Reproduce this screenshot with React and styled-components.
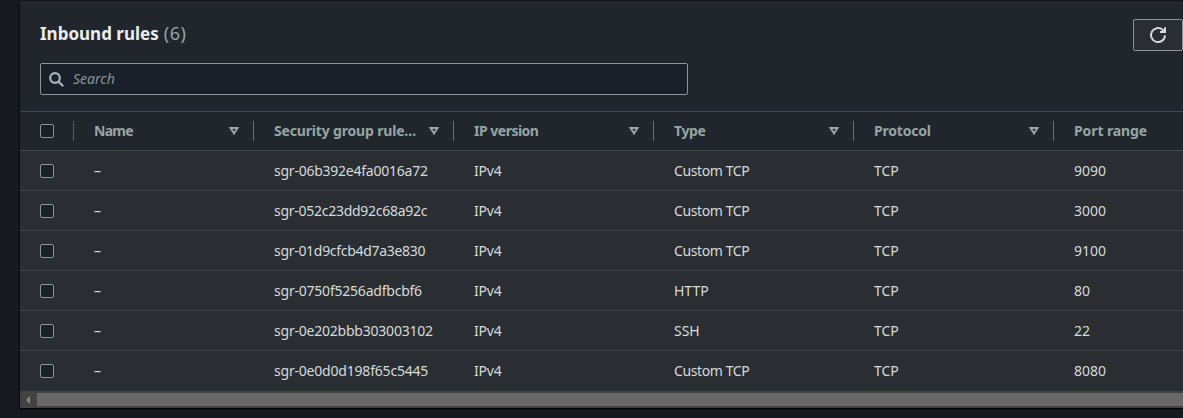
import React from 'react';
import styled, { createGlobalStyle } from 'styled-components';

const Global = createGlobalStyle`
  *, *::before, *::after { box-sizing: border-box; }
  body {
    margin: 0;
    background: #16191f;
    font-family: "Noto Sans", "Open Sans", sans-serif;
    font-size: 14px;
    line-height: 22px;
    color: #d5dbdb;
    overflow: hidden;
  }
`;

const Page = styled.div`
  height: 418px;
  padding: 2px 0 0 20px;
  overflow: hidden;
`;

const Panel = styled.section`
  height: 406px;
  background: #21252c;
  border-top: 1px solid #2c3036;
  box-shadow: 0 1px 1px 0 #000, -1px 1px 1px 0 rgba(0, 0, 0, 0.4);
`;

const PanelHeader = styled.header`
  display: flex;
  justify-content: space-between;
  height: 60px;
  padding: 16px 0 0 20px;
`;

const Title = styled.h2`
  margin: 3px 0 0;
  font-size: 17px;
  line-height: 24px;
  font-weight: 700;
  color: #eaeded;
  white-space: nowrap;
`;

const Counter = styled.span`
  font-size: 18px;
  font-weight: 400;
  line-height: 1;
  color: #95a5a6;
  margin-left: 5px;
  letter-spacing: 0.6px;
`;

const RefreshButton = styled.button`
  display: flex;
  align-items: center;
  justify-content: center;
  width: 50px;
  height: 32px;
  padding: 0;
  border: 1px solid #879596;
  border-radius: 2px;
  background: #2a2e33;
`;

const SearchBox = styled.label`
  display: flex;
  align-items: center;
  width: 648px;
  height: 32px;
  margin: 0 0 16px 20px;
  padding-left: 8px;
  gap: 9px;
  border: 1px solid #879596;
  border-radius: 2px;
  background: #1a2029;
`;

const SearchInput = styled.input`
  flex: 1;
  padding: 0;
  border: 0;
  outline: 0;
  background: transparent;
  font: italic 14px/22px "Noto Sans", sans-serif;
  color: #d5dbdb;
  &::placeholder { color: #879596; opacity: 1; }
`;

const Row = styled.div`
  display: grid;
  grid-template-columns: 54px 180px repeat(4, 200px) 200px;
  align-items: center;
  height: 40px;
  background: #2a2e33;
  border-bottom: 1px solid ${(p) => (p.$last ? '#2a2e33' : '#414750')};
`;

const HeadRow = styled(Row)`
  background: #21252c;
  border-top: 1px solid #414750;
`;

const SelectCell = styled.div`
  display: flex;
  align-items: center;
  height: 20px;
  padding-left: 20px;
  border-right: ${(p) => (p.$divided ? '1px solid #545b64' : '0')};
`;

const Checkbox = styled.span`
  width: 14px;
  height: 14px;
  border: 1px solid #879596;
  border-radius: 2px;
  background: #1a2029;
`;

const HeadCell = styled.div`
  display: flex;
  align-items: center;
  justify-content: space-between;
  height: 20px;
  padding: 0 13px 0 20px;
  border-right: 1px solid #687078;
  font-weight: 700;
  color: #95a5a6;
  white-space: nowrap;
`;

const Label = styled.span`
  letter-spacing: ${(p) => p.$track || 0}px;
`;

const Cell = styled.div`
  padding-left: 20px;
  white-space: nowrap;
  letter-spacing: ${(p) => p.$track || 0}px;
`;

const Scrollbar = styled.div`
  display: flex;
  align-items: center;
  height: 17px;
  background: #424242;
`;

const ScrollArrow = styled.div`
  display: flex;
  width: 17px;
  padding-left: 6px;
`;

const Thumb = styled.div`
  flex: 1;
  height: 13px;
  background: #686868;
`;

const SortIcon = () => (
  <svg width="12" height="10" viewBox="0 0 12 10" fill="none" stroke="#95a5a6" strokeWidth="2">
    <path d="M2.5 2h7L6 7.4z" />
  </svg>
);

const columns = [
  { name: 'Name', track: -0.7 },
  { name: 'Security group rule…', track: -0.17 },
  { name: 'IP version', track: -0.5 },
  { name: 'Type', track: -0.4 },
  { name: 'Protocol', track: -0.2 },
  { name: 'Port range', track: -0.1 },
];

const rules = [
  { id: 'sgr-06b392e4fa0016a72', type: 'Custom TCP', port: '9090', track: -0.24 },
  { id: 'sgr-052c23dd92c68a92c', type: 'Custom TCP', port: '3000', track: -0.27 },
  { id: 'sgr-01d9cfcb4d7a3e830', type: 'Custom TCP', port: '9100', track: -0.3 },
  { id: 'sgr-0750f5256adfbcbf6', type: 'HTTP', port: '80', track: -0.22 },
  { id: 'sgr-0e202bbb303003102', type: 'SSH', port: '22', track: -0.22 },
  { id: 'sgr-0e0d0d198f65c5445', type: 'Custom TCP', port: '8080', track: -0.2 },
];

export default function App() {
  return (
    <Page>
      <Global />
      <Panel>
        <PanelHeader>
          <Title>
            Inbound rules<Counter>(6)</Counter>
          </Title>
          <RefreshButton aria-label="Refresh">
            <svg width="18" height="18" viewBox="0 0 18 18" fill="none" stroke="#d5dbdb" strokeWidth="2">
              <path d="M16 9.2A7 7 0 1 1 13.6 3.8L15.5 5.5" />
              <path d="M16 1.2V6H11" />
              <path d="M16 2.4V6h-4z" fill="#d5dbdb" stroke="none" />
            </svg>
          </RefreshButton>
        </PanelHeader>
        <SearchBox>
          <svg width="15" height="15" viewBox="0 0 15 15" fill="none" stroke="#aab7b8" strokeWidth="2.2">
            <circle cx="6" cy="6" r="4.8" />
            <path d="M9.5 9.5l4.7 4.7" />
          </svg>
          <SearchInput placeholder="Search" />
        </SearchBox>
        <HeadRow>
          <SelectCell $divided>
            <Checkbox />
          </SelectCell>
          {columns.map((c) => (
            <HeadCell key={c.name}>
              <Label $track={c.track}>{c.name}</Label>
              <SortIcon />
            </HeadCell>
          ))}
        </HeadRow>
        {rules.map((r, i) => (
          <Row key={r.id} $last={i === rules.length - 1}>
            <SelectCell>
              <Checkbox />
            </SelectCell>
            <Cell>–</Cell>
            <Cell $track={r.track}>{r.id}</Cell>
            <Cell $track={-0.2}>IPv4</Cell>
            <Cell $track={r.type === 'Custom TCP' ? -0.4 : 0}>{r.type}</Cell>
            <Cell>TCP</Cell>
            <Cell>{r.port}</Cell>
          </Row>
        ))}
        <Scrollbar>
          <ScrollArrow>
            <svg width="4" height="8" viewBox="0 0 4 8" fill="#868686">
              <path d="M4 0v8L0 4z" />
            </svg>
          </ScrollArrow>
          <Thumb />
        </Scrollbar>
      </Panel>
    </Page>
  );
}
